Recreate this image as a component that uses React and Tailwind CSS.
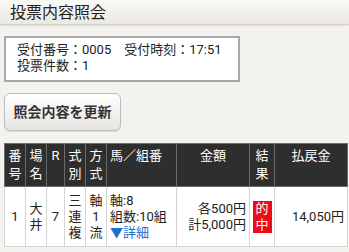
const font = { fontFamily: 'Roboto, "Noto Sans CJK JP", sans-serif' };

function Th({ children, className = '' }) {
  return (
    <th className={`border border-[#6a6a6a] bg-[#2e2e2e] text-white font-normal align-top pt-[3px] leading-[18px] ${className}`}>
      {children}
    </th>
  );
}

function Td({ children, className = '' }) {
  return (
    <td className={`border border-[#d4d4d4] bg-white align-middle leading-[16px] ${className}`}>
      {children}
    </td>
  );
}

export default function App() {
  return (
    <div className="w-[349px] h-[252px] bg-[#f4f2ee] text-[#222] overflow-hidden" style={font}>
      {/* title bar */}
      <div className="h-[25px] bg-gradient-to-b from-[#faf9f6] to-[#ebe8e2] border-b border-[#d6d2ca] shadow-[0_1px_2px_rgba(0,0,0,0.08)] pl-[10px] text-[16px] leading-[25px]">
        投票内容照会
      </div>

      <div className="px-[4px]">
        <div className="mt-[11px] w-[236px] h-[46px] bg-white border-2 border-[#a8a8a8] pl-[11px] pt-[4px] text-[13px] leading-[16px]">
          <div>受付番号：0005　受付時刻：17:51</div>
          <div>投票件数：1</div>
        </div>

        <button className="mt-[11px] w-[117px] h-[38px] rounded-[6px] border border-[#bdbdbd] bg-gradient-to-b from-[#ffffff] to-[#e6e4e0] text-[14px] font-bold text-[#333] shadow-[0_1px_1px_rgba(0,0,0,0.1)]">
          照会内容を更新
        </button>

        <table className="mt-[12px] w-[343px] border-collapse text-[13px] table-fixed">
          <colgroup>
            <col className="w-[21px]" />
            <col className="w-[21px]" />
            <col className="w-[18px]" />
            <col className="w-[21px]" />
            <col className="w-[21px]" />
            <col className="w-[70px]" />
            <col className="w-[73px]" />
            <col className="w-[25px]" />
            <col className="w-[73px]" />
          </colgroup>
          <thead>
            <tr className="h-[43px]">
              <Th>番<br />号</Th>
              <Th>場<br />名</Th>
              <Th>R</Th>
              <Th>式<br />別</Th>
              <Th>方<br />式</Th>
              <Th className="text-left pl-[3px]">馬／組番</Th>
              <Th>金額</Th>
              <Th>結<br />果</Th>
              <Th>払戻金</Th>
            </tr>
          </thead>
          <tbody>
            <tr className="h-[60px]">
              <Td className="text-center">1</Td>
              <Td className="text-center">大<br />井</Td>
              <Td className="text-center">7</Td>
              <Td className="text-center">三<br />連<br />複</Td>
              <Td className="text-center">軸<br />1<br />流</Td>
              <Td className="pl-[3px]">
                軸:8<br />組数:10組<br />
                <span className="text-[#1a6fd0]">▼詳細</span>
              </Td>
              <Td className="text-right pr-[3px]">各500円<br />計5,000円</Td>
              <Td className="text-center">
                <div className="mx-auto w-[19px] h-[32px] bg-[#f00a16] text-white leading-[16px]">
                  的<br />中
                </div>
              </Td>
              <Td className="text-right pr-[3px]">14,050円</Td>
            </tr>
          </tbody>
        </table>
      </div>
    </div>
  );
}
